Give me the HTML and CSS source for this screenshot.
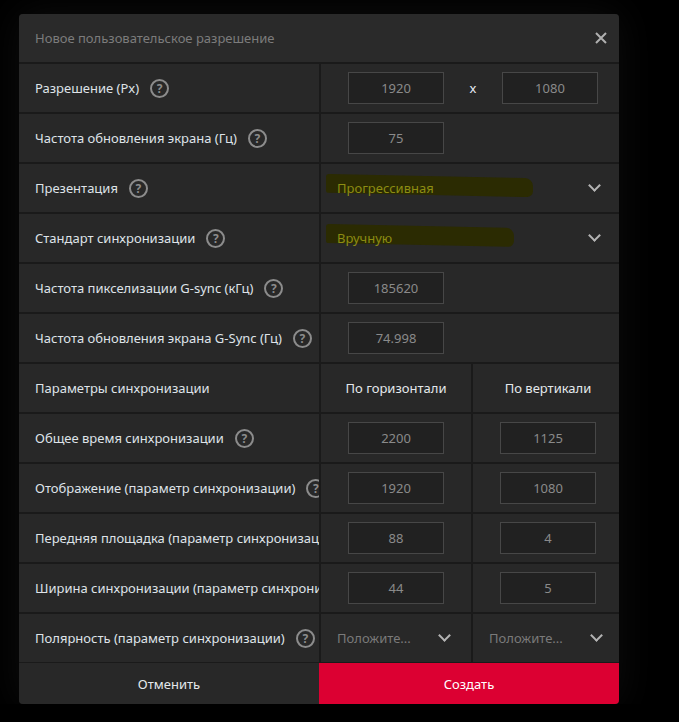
FILE: index.html
```html
<!DOCTYPE html>
<html>
<head>
  <title>Новое пользовательское разрешение</title>
  <link rel="stylesheet" href="styles.css">
</head>
<body>
  <div class="dialog">
    <div class="title-bar">
      <span class="title">Новое пользовательское разрешение</span>
      <span class="close-btn">
        <svg width="12" height="12" viewBox="0 0 12 12"><path d="M1 1L11 11M11 1L1 11" stroke="#b0b0b0" stroke-width="2"/></svg>
      </span>
    </div>

    <div class="rows">
      <div class="row">
        <div class="label">Разрешение (Px) <span class="help">?</span></div>
        <div class="cell pair">
          <div class="field">1920</div>
          <span class="times">x</span>
          <div class="field">1080</div>
        </div>
      </div>

      <div class="row">
        <div class="label">Частота обновления экрана (Гц) <span class="help">?</span></div>
        <div class="cell single"><div class="field">75</div></div>
      </div>

      <div class="row">
        <div class="label">Презентация <span class="help">?</span></div>
        <div class="cell select">
          <span class="marked wide">Прогрессивная</span>
          <span class="chevron"></span>
        </div>
      </div>

      <div class="row">
        <div class="label">Стандарт синхронизации <span class="help">?</span></div>
        <div class="cell select">
          <span class="marked">Вручную</span>
          <span class="chevron"></span>
        </div>
      </div>

      <div class="row">
        <div class="label">Частота пикселизации G-sync (кГц) <span class="help">?</span></div>
        <div class="cell single"><div class="field">185620</div></div>
      </div>

      <div class="row">
        <div class="label">Частота обновления экрана G-Sync (Гц) <span class="help">?</span></div>
        <div class="cell single"><div class="field">74.998</div></div>
      </div>

      <div class="row">
        <div class="label">Параметры синхронизации</div>
        <div class="cell half head">По горизонтали</div>
        <div class="cell half head">По вертикали</div>
      </div>

      <div class="row">
        <div class="label">Общее время синхронизации <span class="help">?</span></div>
        <div class="cell half"><div class="field">2200</div></div>
        <div class="cell half"><div class="field">1125</div></div>
      </div>

      <div class="row">
        <div class="label">Отображение (параметр синхронизации) <span class="help">?</span></div>
        <div class="cell half"><div class="field">1920</div></div>
        <div class="cell half"><div class="field">1080</div></div>
      </div>

      <div class="row">
        <div class="label">Передняя площадка (параметр синхронизации) <span class="help">?</span></div>
        <div class="cell half"><div class="field">88</div></div>
        <div class="cell half"><div class="field">4</div></div>
      </div>

      <div class="row">
        <div class="label">Ширина синхронизации (параметр синхронизации) <span class="help">?</span></div>
        <div class="cell half"><div class="field">44</div></div>
        <div class="cell half"><div class="field">5</div></div>
      </div>

      <div class="row">
        <div class="label">Полярность (параметр синхронизации) <span class="help">?</span></div>
        <div class="cell half select small">
          <span class="muted">Положите...</span>
          <span class="chevron"></span>
        </div>
        <div class="cell half select small">
          <span class="muted">Положите...</span>
          <span class="chevron"></span>
        </div>
      </div>
    </div>

    <div class="buttons">
      <button class="btn cancel">Отменить</button>
      <button class="btn create">Создать</button>
    </div>
  </div>
</body>
</html>
```

FILE: styles.css
```css
body {
  margin: 0;
  background-color: #000;
  font-family: "Noto Sans", "Open Sans", sans-serif;
  font-size: 13px;
  color: #dfe3e8;
}

.dialog {
  width: 600px;
  margin: 14px 0 0 19px;
  background-color: #1a1a1a;
  border-radius: 4px;
  overflow: hidden;
  box-shadow: 0 0 40px rgba(40, 40, 40, 0.35);
}

.title-bar {
  height: 48px;
  background-color: #2a2a2a;
  display: flex;
  align-items: center;
  justify-content: space-between;
  padding: 0 12px 0 16px;
  margin-bottom: 2px;
}

.title {
  color: #7c7c7c;
}

.close-btn {
  display: flex;
  align-items: center;
}

.rows {
  display: flex;
  flex-direction: column;
  gap: 2px;
}

.row {
  display: flex;
  gap: 2px;
  height: 48px;
}

/* long labels are simply cut at the column edge, as in the app */
.label {
  width: 300px;
  flex-shrink: 0;
  background-color: #282828;
  padding-left: 16px;
  box-sizing: border-box;
  display: flex;
  align-items: center;
  white-space: nowrap;
  overflow: hidden;
}

.help {
  flex-shrink: 0;
  width: 15px;
  height: 15px;
  border: 2px solid #8c8c8c;
  border-radius: 50%;
  margin-left: 11px;
  color: #8c8c8c;
  font-size: 12px;
  font-weight: bold;
  line-height: 15px;
  text-align: center;
}

.cell {
  flex: 1;
  background-color: #282828;
  display: flex;
  align-items: center;
  box-sizing: border-box;
}

.half {
  flex: none;
  width: 150px;
  justify-content: center;
}

.half + .half {
  width: 146px;
  padding-left: 4px;
}

.head {
  color: #e4e8ec;
}

.field {
  width: 96px;
  height: 32px;
  box-sizing: border-box;
  background-color: #212121;
  border: 1px solid #474747;
  color: #8a8a8a;
  display: flex;
  align-items: center;
  justify-content: center;
}

.pair {
  padding: 0 21px 0 27px;
  justify-content: space-between;
}

.times {
  color: #e6ecf4;
  font-size: 13px;
}

.single {
  padding-left: 27px;
}

.select {
  justify-content: space-between;
  padding: 0 20px 0 16px;
}

.select.small {
  padding: 0 22px 0 16px;
}

.select.small + .select.small {
  padding: 0 18px 0 16px;
}

.marked {
  position: relative;
  color: #8d8d12;
  z-index: 0;
}

.marked::before {
  content: "";
  position: absolute;
  z-index: -1;
  left: -11px;
  top: -3px;
  width: 188px;
  height: 19px;
  background-color: #2b2b02;
  border-radius: 3px 8px 6px 2px;
  transform: skewY(1.2deg);
}

.marked.wide::before {
  width: 207px;
}

.muted {
  color: #7a7a7a;
}

.chevron {
  width: 7px;
  height: 7px;
  border-right: 2px solid #b4b4b4;
  border-bottom: 2px solid #b4b4b4;
  transform: rotate(45deg);
  margin-top: -5px;
}

.buttons {
  display: flex;
  margin-top: 1px;
}

.btn {
  height: 41px;
  border: none;
  font-family: inherit;
  font-size: 13px;
}

.cancel {
  width: 300px;
  background-color: #282828;
  color: #e4e8ec;
}

.create {
  flex: 1;
  background-color: #dc0032;
  color: #fff;
}
```
